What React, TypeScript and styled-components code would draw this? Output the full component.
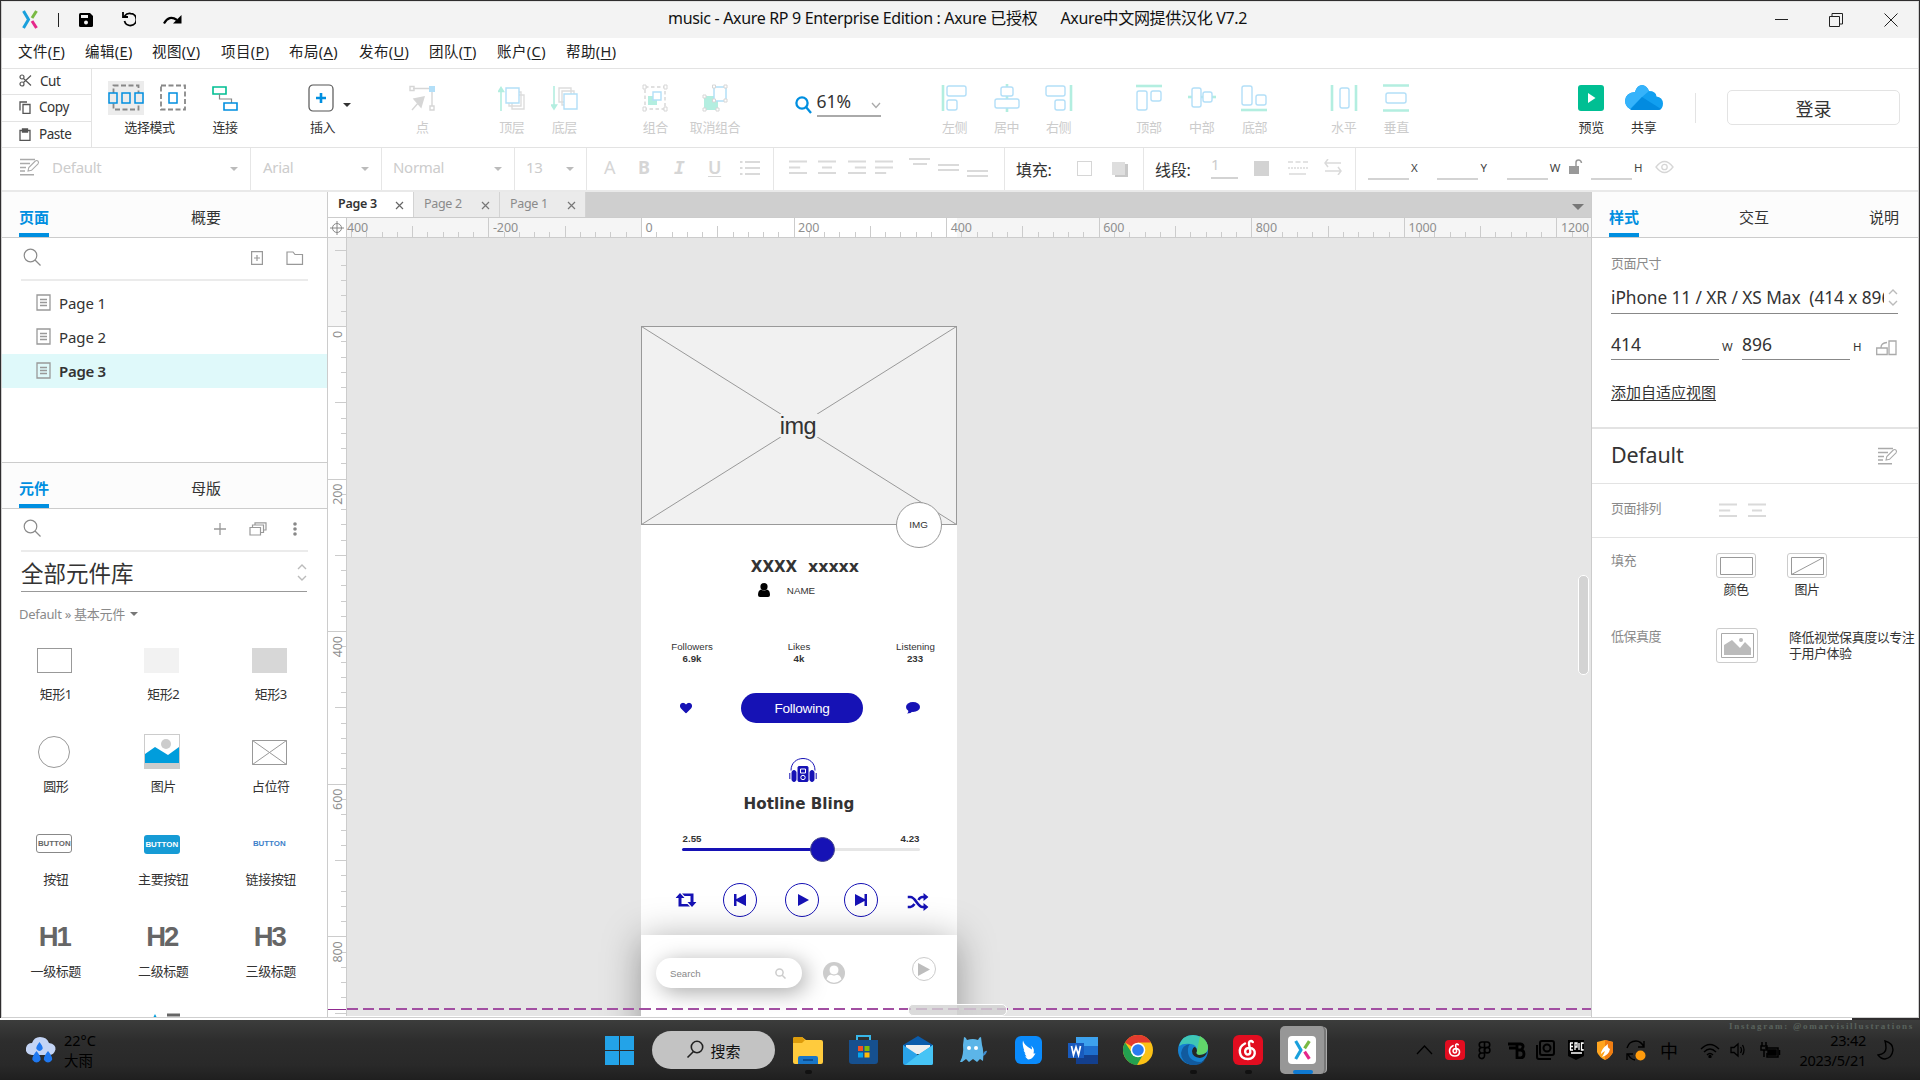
import React from "react";
import styled, { createGlobalStyle, css } from "styled-components";

const UI = `"Noto Sans", "Noto Sans CJK SC", sans-serif`;
const BLUE = "#008fe0";
const PALE_BLUE = "#b3dff8";
const PALE_GREEN = "#b3eee0";
const INDIGO = "#1612b5";

const Global = createGlobalStyle`
  * { box-sizing: border-box; }
  body { margin: 0; background: #2b2a2c; font-family: ${UI}; color: #333; overflow: hidden; }
  svg { display: block; flex: none; }
`;

/* ---------- shell ---------- */
const Screen = styled.div`
  width: 1920px; height: 1080px; display: flex; flex-direction: column; overflow: hidden;
  background: #2f2d2e; white-space: pre;
`;
const Window = styled.div`
  height: 1017px; margin: 1px 1px 0; border: 1px solid #cfcfcf; border-top-color: #e2e2e2;
  background: #fff; display: flex; flex-direction: column;
`;
const Gutter = styled.div`height: 2px; flex: none; background: #fff; width: 1852px;`;

const TitleBar = styled.header`
  height: 36px; flex: none; background: #f3f3f3; display: flex; align-items: center; position: relative; padding-bottom: 1px;
`;
const Title = styled.div`
  position: absolute; left: 666px; top: 5px; font-size: 16px; line-height: 22px; letter-spacing: -0.33px; color: #111;
`;
const Gap = styled.i<{ $w: number }>`flex: none; width: ${(p) => p.$w}px;`;
const Push = styled.i`flex: 1;`;
const TitleRule = styled.i`width: 1px; height: 14px; background: #222;`;

const MenuBar = styled.nav`
  height: 31px; flex: none; display: flex; border-bottom: 1px solid #e3e3e3; padding-left: 16px;
`;
const MenuItem = styled.span<{ $w: number }>`
  width: ${(p) => p.$w}px; font-size: 14.5px; line-height: 26px; letter-spacing: 0.4px; color: #222;
  u { text-underline-offset: 2px; }
`;

/* ---------- main toolbar ---------- */
const Toolbar = styled.div`
  height: 79px; flex: none; display: flex; border-bottom: 1px solid #e3e3e3;
`;
const Clipboard = styled.div`width: 90px; border-right: 1px solid #e3e3e3; flex: none;`;
const ClipRow = styled.div`
  height: 25px; display: flex; align-items: center; padding: 0 0 2px 17px; gap: 8px; font-size: 13.5px; letter-spacing: -0.45px;
  & + & { border-top: 1px solid #e3e3e3; height: 27px; }
`;
const Tool = styled.div<{ $off?: boolean; $w?: number }>`
  width: ${(p) => p.$w ?? 52.5}px; flex: none; padding-top: 10px; display: flex; flex-direction: column; align-items: center;
  color: ${(p) => (p.$off ? "#ccc" : "#333")};
`;
const ToolArt = styled.div`height: 38px; display: flex; align-items: center; justify-content: center; position: relative;`;
const ToolLabel = styled.span<{ $shift?: number }>`
  font-size: 13px; line-height: 20px; letter-spacing: -0.4px; margin-top: -0.5px; margin-left: ${(p) => p.$shift ?? 0}px;
`;
const ActiveArt = styled.div`background: #ececec; width: 36px; height: 34px; display: grid; place-items: center;`;
const Caret = styled.i<{ $c?: string; $s?: number }>`
  width: 0; height: 0; flex: none; border: ${(p) => p.$s ?? 4}px solid transparent; border-bottom: 0;
  border-top-color: ${(p) => p.$c ?? "#333"};
`;
const InsertCaret = styled(Caret)`margin: 34px 0 0 -4px;`;
const TabMenuCaret = styled(Caret)`margin: 12px 7px 0 0;`;
const ZoomField = styled.div`
  margin-top: 21px; height: 27px; width: 64px; border-bottom: 2px solid #aaa; display: flex; align-items: center;
  justify-content: space-between; font-size: 17.5px; letter-spacing: 0; padding-bottom: 3px;
  svg { margin-top: 9px; }
`;
const ZoomIcon = styled.div`margin-top: 27px; width: 22px;`;
const ToolRule = styled.i`width: 1px; height: 30px; margin-top: 24px; background: #e3e3e3;`;
const Login = styled.button`
  width: 173px; height: 35px; margin-top: 21px; border: 1.5px solid #e3e3e3; border-radius: 5px; background: #fff; padding: 0;
  font: 18px ${UI}; color: #333;
`;

/* ---------- style bar ---------- */
const StyleBar = styled.div`height: 44px; flex: none; display: flex; border-bottom: 2px solid #e9e9e9;`;
const Cell = styled.div<{ $w: number; $l: number }>`
  width: ${(p) => p.$w}px; padding-left: ${(p) => p.$l}px; flex: none; display: flex; align-items: center;
  border-right: 1px solid #e6e6e6; color: #ccc; font-size: 15px; letter-spacing: -0.3px; padding-bottom: 4px;
`;
const CellLast = styled(Cell)`border-right: 0; color: #444; font-size: 11.5px;`;
const CellCaret = styled(Caret)`margin: 4px 12px 0 0;`;
const CellLabel = styled.span<{ $w: number }>`
  width: ${(p) => p.$w}px; flex: none; color: #333; font-size: 16px; letter-spacing: -0.3px; padding-top: 3px;
`;
const Glyph = styled.span<{ $w: number; $b?: boolean; $i?: boolean; $u?: boolean }>`
  width: ${(p) => p.$w}px; flex: none; font-size: 18px; text-align: left; color: #d6d6d6;
  ${(p) => p.$b && css`font-weight: 700;`}
  ${(p) => p.$i && css`font-style: italic; font-family: "DejaVu Sans Mono", monospace; font-weight: 700;`}
  ${(p) => p.$u && css`text-decoration: underline; text-underline-offset: 2px; font-weight: 600;`}
`;
const Line = styled.i<{ $w: number }>`width: ${(p) => p.$w}px; height: 2px; background: #d3d3d3; margin-top: 24px; flex: none;`;
const LineValue = styled.div`width: 27px; border-bottom: 2px solid #d3d3d3; height: 24px; line-height: 18px;`;
const Swatch = styled.i<{ $k: "open" | "drop" | "full" }>`
  width: 15px; height: 15px; flex: none; margin-top: 2px;
  ${(p) => p.$k === "open" && css`border: 1.5px solid #d6d6d6;`}
  ${(p) => p.$k === "drop" && css`background: #dedede; box-shadow: 3px 2px 0 #c8c8c8; width: 13px; height: 13px;`}
  ${(p) => p.$k === "full" && css`background: #d3d3d3;`}
`;

/* ---------- workspace ---------- */
const Work = styled.div`flex: 1; display: flex; min-height: 0;`;
const LeftPanel = styled.aside`width: 326px; flex: none; border-right: 1px solid #ccc; overflow: hidden; display: flex; flex-direction: column;`;
const RightPanel = styled.aside`flex: 1; min-width: 0; border-left: 1px solid #ccc;`;
const Tabs = styled.div<{ $l: number }>`
  height: 46px; flex: none; display: flex; padding-left: ${(p) => p.$l}px; background: #fcfcfc; border-bottom: 1px solid #ccc;
`;
const Tab = styled.span<{ $on?: boolean; $gap?: number }>`
  width: 30px; margin-right: ${(p) => p.$gap ?? 0}px; height: 45px; line-height: 50px; font-size: 15px; flex: none;
  ${(p) => p.$on && css`color: ${BLUE}; font-weight: 700; border-bottom: 4px solid ${BLUE};`}
`;
const SearchRow = styled.div`
  height: 43px; flex: none; margin: 0 19px; display: flex; align-items: center; border-bottom: 2px solid #ebebeb; padding: 0 0 2px 2px;
`;
const PageList = styled.div`height: 176px; margin-top: 5px; flex: none;`;
const PageRow = styled.div<{ $on?: boolean }>`
  height: 34px; display: flex; align-items: center; padding: 0 0 1px 34px; gap: 8px; font-size: 15px; letter-spacing: -0.1px;
  ${(p) => p.$on && css`background: #dff9fa; font-weight: 600; letter-spacing: -0.3px;`}
`;
const SecondTabs = styled(Tabs)`border-top: 1px solid #ccc; height: 47px;`;
const LibSelect = styled.div`
  height: 40px; margin: 0 20px 0 19px; flex: none; border-bottom: 1.5px solid #999; display: flex; align-items: center;
  justify-content: space-between; font-size: 22.5px; padding-top: 2px;
`;
const Crumb = styled.div`
  padding-left: 17px; font-size: 13px; color: #8a8a8a; height: 44px; line-height: 46px; letter-spacing: -0.3px; display: flex; align-items: center; gap: 5px; flex: none;
`;
const Library = styled.div`
  display: grid; grid-template-columns: repeat(3, 107.5px); grid-auto-rows: 92.4px; overflow: hidden; flex: 1; margin-left: -1.5px;
`;
const Widget = styled.div`
  display: flex; flex-direction: column; align-items: center; font-size: 13px; letter-spacing: -0.4px;
  span { margin-left: 3px; line-height: 20px; }
`;
const WidgetArt = styled.div`height: 48px; width: 50px; display: grid; place-items: center;`;
const RectArt = styled.i<{ $bg: string; $bd?: string }>`
  width: 35px; height: 25px; background: ${(p) => p.$bg}; border: 1px solid ${(p) => p.$bd ?? p.$bg};
`;
const CircleArt = styled.i`width: 32px; height: 32px; border: 1.5px solid #999; border-radius: 50%;`;
const ButtonArt = styled.b<{ $k: "line" | "fill" | "link" }>`
  width: 36px; height: 19px; border-radius: 3px; font: 700 7.9px/17px "Liberation Sans", sans-serif; letter-spacing: 0; text-align: center; color: #666;
  border: 1px solid transparent; margin-top: -3px;
  ${(p) => p.$k === "line" && css`border-color: #888;`}
  ${(p) => p.$k === "fill" && css`background: #169bd5; color: #fff; margin-top: 0;`}
  ${(p) => p.$k === "link" && css`color: #3d7fc9;`}
`;
const HeadArt = styled.b`font: 700 27.5px "Liberation Sans", sans-serif; letter-spacing: -2px; color: #666;`;

const Center = styled.main`width: 1263px; flex: none; display: flex; flex-direction: column; min-width: 0;`;
const DocTabs = styled.div`height: 26px; flex: none; display: flex; background: #cfcfcf; border-bottom: 1px solid #ccc;`;
const DocTab = styled.div<{ $on?: boolean }>`
  width: 86px; border-right: 1px solid #d3d3d3; background: ${(p) => (p.$on ? "#fff" : "#ebebeb")}; display: flex; align-items: center;
  justify-content: space-between; padding: 0 9px 2px 10px; font-size: 12.5px; letter-spacing: -0.3px;
  color: ${(p) => (p.$on ? "#333" : "#8a8a8a")}; font-weight: ${(p) => (p.$on ? 600 : 400)};
  svg { margin-top: 4px; }
`;
const RulerRow = styled.div`height: 20px; flex: none; display: flex; border-bottom: 1px solid #ccc; overflow: hidden;`;
const Corner = styled.div`width: 19px; border-right: 1px solid #ccc; display: grid; place-items: center; flex: none;`;
const Stage = styled.div`flex: 1; display: flex; min-height: 0; border-bottom: 1px solid #fff;`;
const VRuler = styled.div`width: 19px; flex: none; border-right: 1px solid #ccc; overflow: hidden;`;
const Canvas = styled.div`flex: 1; background: #e6e6e6; position: relative; overflow: hidden;`;
const Page = styled.div`position: absolute; left: 294px; top: 88px; width: 316px; height: 700px; background: #fff;`;
const Fold = styled.i`
  position: absolute; left: 0; right: 0; bottom: 6px; height: 2px;
  background: repeating-linear-gradient(90deg, #a24fa2 0 11px, transparent 11px 16.25px);
`;
const HThumb = styled.i`
  position: absolute; left: 561px; bottom: 0; width: 99px; height: 12px; border: 1px solid #fff; border-radius: 5px; background: #d3d3d3d0;
`;
const VThumb = styled.i`
  position: absolute; right: 2px; top: 337px; width: 11px; height: 100px; border: 1px solid #fff; border-radius: 5px; background: #d3d3d3;
`;

/* ---------- phone prototype ---------- */
const Txt = styled.span<{ $x: number; $y: number; $s: number; $b?: boolean; $f?: string; $c?: string; $ls?: number }>`
  position: absolute; left: ${(p) => p.$x}px; top: ${(p) => p.$y}px; transform: translate(-50%, -50%);
  font: ${(p) => (p.$b ? 700 : 400)} ${(p) => p.$s}px/1.2 ${(p) => p.$f ?? `"Liberation Sans", sans-serif`};
  color: ${(p) => p.$c ?? "#333"}; letter-spacing: ${(p) => p.$ls ?? 0}px;
`;
const At = styled.div<{ $x: number; $y: number }>`
  position: absolute; left: ${(p) => p.$x}px; top: ${(p) => p.$y}px; transform: translate(-50%, -50%);
`;
const Avatar = styled.div`
  position: absolute; left: 255px; top: 176px; width: 46px; height: 46px; border: 1px solid #999; border-radius: 50%; background: #fff;
`;
const Follow = styled.div`
  position: absolute; left: 100px; top: 367px; width: 122px; height: 30px; border-radius: 15px; background: ${INDIGO}; color: #fff;
  font: 13.6px/31px "Liberation Sans", sans-serif; text-align: center; letter-spacing: -0.25px;
`;
const Track = styled.div`
  position: absolute; left: 41px; top: 522px; width: 238px; height: 3px; border-radius: 2px;
  background: linear-gradient(90deg, ${INDIGO} 58%, #e6e6e6 58%);
`;
const Knob = styled.i`position: absolute; left: 128px; top: -11px; width: 25px; height: 25px; border-radius: 50%; background: ${INDIGO}; border: 1px solid #4a4a8c;`;
const Ring = styled(At)<{ $c?: string; $d?: number }>`
  width: ${(p) => p.$d ?? 34}px; height: ${(p) => p.$d ?? 34}px; border-radius: 50%; border: 1px solid ${(p) => p.$c ?? INDIGO};
  display: grid; place-items: center;
`;
const Dock = styled.div`
  position: absolute; left: 0; top: 609px; width: 316px; height: 110px; background: #fff; box-shadow: 0 4px 38px rgba(0, 0, 0, 0.35);
`;
const SearchPill = styled.div`
  position: absolute; left: 15px; top: 23px; width: 146px; height: 30px; border-radius: 15px; background: #fff;
  box-shadow: 4px 4px 22px rgba(0, 0, 0, 0.35); display: flex; align-items: center; justify-content: space-between; padding: 0 16px 0 14px;
  font: 9.7px "Liberation Sans", sans-serif; color: #888;
`;

/* ---------- inspector ---------- */
const Section = styled.div<{ $h: number; $thick?: boolean }>`
  height: ${(p) => p.$h}px; padding: 0 20px 0 19px; border-bottom: ${(p) => (p.$thick ? 2 : 1)}px solid #e3e3e3; display: flex; flex-direction: column;
`;
const InlineSection = styled(Section)`flex-direction: row; align-items: center; justify-content: space-between;`;
const FieldLabel = styled.span<{ $w?: number; $t?: number }>`
  font-size: 13px; line-height: 18px; letter-spacing: -0.5px; color: #8a8a8a; width: ${(p) => (p.$w ? p.$w + "px" : "auto")}; flex: none;
  margin-top: ${(p) => p.$t ?? 0}px;
`;
const SizeSelect = styled.div`
  margin-top: 10px; height: 32px; border-bottom: 1px solid #888; display: flex; align-items: center; gap: 4px; font-size: 17.3px; letter-spacing: -0.07px;
  div { width: 274px; overflow: hidden; }
`;
const SizeRow = styled.div`display: flex; margin-top: 14px; height: 32px; font-size: 17.5px;`;
const NumField = styled.div`width: 108px; border-bottom: 1px solid #888; line-height: 33px; height: 32px;`;
const Unit = styled.span<{ $w: number }>`width: ${(p) => p.$w}px; font-size: 11.5px; line-height: 37px; flex: none;`;
const AdaptLink = styled.a`margin-top: 21px; font-size: 15px; line-height: 22px; text-decoration: underline; text-underline-offset: 2px;`;
const StyleName = styled.span`font-size: 21.5px; letter-spacing: -0.2px; padding-bottom: 4px;`;
const Row = styled.div<{ $t: number }>`display: flex; padding: ${(p) => p.$t}px 0 0 19px;`;
const Option = styled.div<{ $mr?: number }>`
  display: flex; flex-direction: column; align-items: center; font-size: 13px; line-height: 20px; letter-spacing: -0.5px; margin-right: ${(p) => p.$mr ?? 0}px;
`;
const Frame = styled.div<{ $w: number; $h: number }>`
  width: ${(p) => p.$w}px; height: ${(p) => p.$h}px; border: 1px solid #ccc; border-radius: 3px; display: grid; place-items: center; margin-bottom: 1px;
`;
const Note = styled.p`margin: 1px 0 0 31px; font-size: 13px; line-height: 16px; letter-spacing: -0.47px;`;

/* ---------- taskbar ---------- */
const TaskBar = styled.footer`
  height: 60px; flex: none; background: linear-gradient(180deg, #3c3d3c 0, #2d2d2d 35%, #292929 75%, #1f1f1f 100%); display: flex; position: relative; align-items: center; color: #000;
`;
const Weather = styled.div`display: flex; width: 592px; padding-left: 25px; gap: 8px; align-items: center; font-size: 14.5px; line-height: 20px; flex: none;`;
const TaskApp = styled.div<{ $run?: boolean }>`
  width: 55px; height: 60px; flex: none; display: grid; place-items: center; position: relative;
  ${(p) => p.$run && css`&::after { content: ""; position: absolute; left: 24px; bottom: 6px; width: 7px; height: 4px; border-radius: 2px; background: #111; }`}
`;
const TaskSearch = styled.div`
  width: 123px; height: 38px; margin: 0 5.5px 0 5px; border-radius: 19px; background: #c3c3c3; display: flex; align-items: center; justify-content: center; gap: 6px;
  font-size: 15px; color: #111; flex: none;
`;
const ActiveApp = styled.div`
  width: 46px; height: 48px; border-radius: 5px; background: #979797; border-right: 2px solid #777; display: grid; place-items: center; position: relative;
  box-shadow: 2px 0 0 -1px #aaa;
  &::after { content: ""; position: absolute; left: 13px; bottom: 0; width: 20px; height: 4px; border-radius: 2px; background: #0f79d0; }
`;
const White = styled.div`width: 28px; height: 28px; border-radius: 4px; background: #fff; display: grid; place-items: center;`;
const Tray = styled.div`position: absolute; left: 1416px; right: 0; top: 0; height: 60px; display: flex; align-items: center;`;
const TrayIcon = styled.div<{ $w: number }>`width: ${(p) => p.$w}px; flex: none; display: flex; font-size: 18px;`;
const Clock = styled.div`text-align: right; width: 71px; font-size: 14.5px; line-height: 20px; letter-spacing: -0.25px; flex: none;`;
const Watermark = styled.div`
  position: absolute; right: 6px; top: 1px; font: 700 9px/10px "Liberation Serif", serif; color: #59625c; letter-spacing: 1.7px;
`;

/* ---------- icons ---------- */
type IcoProps = { w: number; h?: number; v?: string; c?: string; f?: string; s?: number; children: React.ReactNode };
const Ico = ({ w, h = w, v, c = "none", f = "none", s = 1, children }: IcoProps) => (
  <svg width={w} height={h} viewBox={v ?? `0 0 ${w} ${h}`} stroke={c} fill={f} strokeWidth={s}>{children}</svg>
);
const AxureMark = ({ w = 16, h = 19 }) => (
  <Ico w={w} h={h} v="0 0 16 19" s={3}>
    <path d="M1.5 1 6.5 9.5 1.5 18" stroke="#1aa0dc" /><path d="M14.5 1 10 8" stroke="#79b943" /><path d="M10 11 14.5 18" stroke="#e5278a" />
  </Ico>
);
const Magnifier = () => <Ico w={19} c="#8a8a8a" s={1.2}><circle cx="7.5" cy="7.5" r="6.3" /><path d="m12 12 5.5 5.5" /></Ico>;
const Spinner = () => <Ico w={10} h={17} c="#bbb" s={1.4}><path d="m1 5 4-4 4 4M1 12l4 4 4-4" /></Ico>;
const EditStyle = () => (
  <Ico w={20} h={18} c="#aaa" s={1.4}><path d="M0 1.5h15M0 5.5h10M0 9.5h6M0 13h5M0 16.8h14" /><path d="m8 13 .8-3.500 6.500-6.500q1.600-1 2.700.2t0 2.600l-6.500 6.500z" strokeWidth="1.1" /></Ico>
);
const AlignLines = ({ k, w = 18 }: { k: number; w?: number }) => {
  const d = [`M0 1.5h${w}M0 7.5h${w * 0.62}M0 13h${w}`, `M0 1.5h${w}M${w * 0.22} 7.5h${w * 0.56}M0 13h${w}`, `M0 1.5h${w}M${w * 0.38} 7.5h${w * 0.62}M0 13h${w}`, `M0 1.5h${w}M0 7.5h${w}M0 13h${w * 0.62}`];
  return <Ico w={w} h={15} c="#dadada" s={2}><path d={d[k]} /></Ico>;
};
const VAlign = ({ y }: { y: number }) => <Ico w={21} h={20} c="#dadada" s={2}><path d={`M0 ${y}h21M${y > 5 ? 0 : 4} ${y + 5}h${y > 5 ? 21 : 14}`} /></Ico>;
const Close = ({ c = "#777" }) => <Ico w={9} c={c} s={1.2}><path d="m1 1 7 7M8 1 1 8" /></Ico>;
const PageIcon = () => <Ico w={15} h={17} c="#999" s={1.3}><path d="M1 1h13v15H1zM4 5.5h7M4 8.5h7M4 11.5h7" /></Ico>;
const Netease = ({ s = 30 }) => (
  <Ico w={s} v="0 0 30 30" c="#fff" s={2.4}>
    <rect width="30" height="30" rx="6" fill="#e20d20" stroke="none" />
    <path d="M12 8.5c-8 4-6.500 15.500 3 15.500 8 0 9.500-11 1.500-11-6 0-5 6.500-1.800 6.500 4.500 0 2-6 1.300-10.500-.3-3.500 2.500-3.500 3.800-2" strokeLinecap="round" />
  </Ico>
);

const align = (bars: React.ReactNode, rects: React.ReactNode) => (
  <Ico w={28} h={28} c={PALE_BLUE} f="#fff" s={1.4}><g stroke={PALE_GREEN} strokeWidth="2.600">{bars}</g>{rects}</Ico>
);
const ALIGN = [
  ["左侧", align(<path d="M2 1v26" />, <><rect x="6" y="2" width="19" height="10" rx="2" /><rect x="6" y="16" width="10" height="10" rx="2" /></>)],
  ["居中", align(<path d="M14 0v28" />, <><rect x="8" y="3" width="12" height="9" rx="2" /><rect x="2" y="15" width="24" height="9" rx="2" /></>)],
  ["右侧", align(<path d="M26 1v26" />, <><rect x="1" y="2" width="19" height="10" rx="2" /><rect x="10" y="16" width="10" height="10" rx="2" /></>)],
] as const;
const ALIGN_V = [
  ["顶部", align(<path d="M1 2h26" />, <><rect x="2" y="7" width="10" height="19" rx="2" /><rect x="16" y="7" width="10" height="10" rx="2" /></>)],
  ["中部", align(<path d="M0 13h28" />, <><rect x="4" y="4" width="9" height="19" rx="2" /><rect x="15" y="8" width="9" height="10" rx="2" /></>)],
  ["底部", align(<path d="M1 26h26" />, <><rect x="2" y="2" width="10" height="19" rx="2" /><rect x="16" y="11" width="10" height="10" rx="2" /></>)],
] as const;
const SPREAD = [
  ["水平", align(<path d="M2 1v26M26 1v26" />, <rect x="10" y="4" width="9" height="20" rx="2" />)],
  ["垂直", align(<path d="M1 1.500h26M1 26.500h26" />, <rect x="4" y="9" width="20" height="10" rx="2" />)],
] as const;

const UNIT = 0.7629;
const HRuler = () => {
  const ticks = [];
  for (let u = -380; u <= 1240; u += 20) ticks.push(u);
  return (
    <Ico w={1244} h={19}>
      <rect width="1244" height="19" fill="#f5f5f5" /><rect x="294" width="316" height="19" fill="#fff" />
      {ticks.map((u) => { const x = Math.round(294 + u * UNIT) + 0.5; return <path key={u} d={`M${x} ${u % 200 === 0 ? 0 : u % 100 === 0 ? 8 : 14}V19`} stroke="#ccc" />; })}
      <text x="0" y="14" fontSize="12.5" fill="#8f8f8f" letterSpacing="-0.1">400</text>
      {[-200, 0, 200, 400, 600, 800, 1000, 1200].map((u) => (
        <text key={u} x={298.5 + u * UNIT} y="14" fontSize="12.5" fill="#8f8f8f" letterSpacing="-0.1">{u}</text>
      ))}
    </Ico>
  );
};
const VRulerArt = () => {
  const ticks = [];
  for (let u = -100; u <= 900; u += 20) ticks.push(u);
  return (
    <Ico w={18} h={779}>
      <rect width="18" height="88" fill="#f5f5f5" />
      {ticks.map((u) => { const y = Math.round(88 + u * UNIT) + 0.5; return <path key={u} d={`M${u % 200 === 0 ? 0 : u % 100 === 0 ? 7 : 13} ${y}H18`} stroke="#ccc" />; })}
      {[0, 200, 400, 600, 800].map((u) => (
        <text key={u} transform={`translate(13.500 ${93 + u * UNIT}) rotate(-90)`} textAnchor="end" fontSize="12.5" fill="#8f8f8f" letterSpacing="-0.1">{u}</text>
      ))}
      <path d="M0 771.500H18" stroke="#8f2a8f" />
    </Ico>
  );
};

const DEJAVU = `"DejaVu Sans", sans-serif`;
const Phone = () => (
  <Page>
    <svg width="316" height="199" stroke="#999">
      <rect x=".5" y=".5" width="315" height="198" fill="#f1f1f1" /><path d="M.5.5l315 198M315.500.5.5 198.500" />
      <rect x="139" y="88" width="38" height="23" fill="#f1f1f1" stroke="none" />
    </svg>
    <Txt $x={157} $y={100} $s={23.5} $ls={-0.5}>img</Txt>
    <Avatar /><Txt $x={277.5} $y={198.5} $s={9.9}>IMG</Txt>
    <Txt $x={133} $y={240.5} $s={15} $b $f={DEJAVU}>XXXX</Txt>
    <Txt $x={192.5} $y={241} $s={15.8} $b $f={DEJAVU}>xxxxx</Txt>
    <At $x={123} $y={264}><Ico w={12} h={14} f="#000"><circle cx="6" cy="3.700" r="3.600" /><path d="M3 6.500q3 2.200 6 0 3 .8 3 5.500 0 2-2 2H2q-2 0-2-2 0-4.700 3-5.500z" /></Ico></At>
    <Txt $x={160} $y={264.5} $s={9.8}>NAME</Txt>
    <Txt $x={51} $y={321} $s={9.7}>Followers</Txt><Txt $x={51} $y={333} $s={9.7} $b>6.9k</Txt>
    <Txt $x={158} $y={321} $s={9.7}>Likes</Txt><Txt $x={158} $y={333} $s={9.7} $b>4k</Txt>
    <Txt $x={274.5} $y={321} $s={9.7}>Listening</Txt><Txt $x={274} $y={333} $s={9.7} $b>233</Txt>
    <At $x={45} $y={382}><Ico w={12} h={11} f={INDIGO}><path d="M6 11 1 6Q-1 3.500.8 1.300 3.500-1 6 2 8.500-1 11.200 1.300 13 3.500 11 6z" /></Ico></At>
    <Follow>Following</Follow>
    <At $x={272} $y={382}><Ico w={14} h={12} f={INDIGO}><ellipse cx="7" cy="5" rx="7" ry="5" /><path d="M2 7q1 3-1 4.500Q5 11.500 7 9z" /></Ico></At>
    <At $x={162} $y={444}>
      <Ico w={28} h={25} c={INDIGO} f={INDIGO}><path d="M2 13C2-3 26-3 26 13" fill="none" /><rect x="3" y="13" width="4" height="11" rx="2" /><rect x="21" y="13" width="4" height="11" rx="2" /><path d="M.8 15.500v6M27.200 15.500v6" /><rect x="9" y="9" width="10" height="15" rx="1" /><path d="M11.500 11.500h5v4h-5z" stroke="#fff" fill="none" /><circle cx="14" cy="20" r="2.200" stroke="#fff" fill="none" /></Ico>
    </At>
    <Txt $x={158} $y={478} $s={15.2} $b $f={DEJAVU}>Hotline Bling</Txt>
    <Txt $x={51} $y={513} $s={9.7} $b>2.55</Txt><Txt $x={269} $y={513} $s={9.7} $b>4.23</Txt>
    <Track><Knob /></Track>
    <At $x={44.5} $y={574}><Ico w={21} h={14} f={INDIGO}><path d="M4.500 0 9 5H6v6h6l2.500 2.500H3V5H0zM16.500 14 12 9h3V3H9L6.500.5H18V9h3z" /></Ico></At>
    <Ring $x={99} $y={574}><Ico w={12} h={12} f={INDIGO}><path d="M0 0h2.500v5L12 0v12L2.500 7v5H0z" /></Ico></Ring>
    <Ring $x={161} $y={574}><Ico w={13} h={12} f={INDIGO}><path d="m2 0 11 6-11 6z" /></Ico></Ring>
    <Ring $x={220} $y={574}><Ico w={12} h={12} f={INDIGO}><path d="M12 0H9.500v5L0 0v12l9.500-5v5H12z" /></Ico></Ring>
    <At $x={276.5} $y={576}><Ico w={21} h={18} c={INDIGO} s={2.6}><path d="M0 4h3c5 0 7 10 12 10h2M0 14h3c2 0 3-1.500 4-3M11 7c1-2 2.500-3 4-3h2" /><path d="m16 0 5 4-5 4zM16 10l5 4-5 4z" fill={INDIGO} stroke="none" /></Ico></At>
    <Dock>
      <SearchPill>Search<Ico w={11} c="#ccc" s={1.5}><circle cx="4.500" cy="4.500" r="3.600" /><path d="m7.200 7.200 3.300 3.300" /></Ico></SearchPill>
      <At $x={192.5} $y={38}><Ico w={22} v="0 0 22 22"><circle cx="11" cy="11" r="11" fill="#ccc" /><path d="M3.500 17.500q1-4.500 5-5 2.500 1.500 5 0 4 .5 5 5Q11 24 3.500 17.500z" fill="#fff" /><circle cx="11" cy="8" r="5" fill="#fff" stroke="#ccc" /></Ico></At>
      <Ring $x={283} $y={34} $d={24} $c="#ccc"><Ico w={12} h={13} f="#bdbdbd"><path d="m0 0 12 6.500L0 13z" /></Ico></Ring>
    </Dock>
  </Page>
);

const menus: [string, string, number][] = [["文件", "F", 67], ["编辑", "E", 67], ["视图", "V", 69], ["项目", "P", 68], ["布局", "A", 70], ["发布", "U", 70], ["团队", "T", 68], ["账户", "C", 69], ["帮助", "H", 60]];

export default function App() {
  return (
    <Screen>
      <Global />
      <Window>
        <TitleBar>
          <Gap $w={20} /><AxureMark /><Gap $w={20} /><TitleRule /><Gap $w={20} />
          <Ico w={14} f="#000"><path d="M1.500 0H11l3 3v9.500q0 1.500-1.500 1.500h-11Q0 14 0 12.500v-11Q0 0 1.500 0z" /><path d="M2 2h7v3H2z" fill="#f3f3f3" /><circle cx="7" cy="9.500" r="2" fill="#f3f3f3" /></Ico>
          <Gap $w={29} />
          <Ico w={14} h={15} c="#000" s={1.8}><path d="M2.500 4Q5 1 8.500 1.500a6 6 0 1 1-6 7.500" /><path d="M1 0v5h5" /></Ico>
          <Gap $w={27} />
          <Ico w={19} h={11} c="#000" s={2.2}><path d="M1 9.500Q6 .5 14 6" /><path d="M18.500 1v8.500h-8.500z" fill="#000" stroke="none" /></Ico>
          <Title>music - Axure RP 9 Enterprise Edition : Axure 已授权{"      "}Axure中文网提供汉化 V7.2</Title>
          <Push />
          <Ico w={13} h={13} c="#222"><path d="M0 6.500h13" /></Ico><Gap $w={41} />
          <Ico w={14} c="#222"><path d="M.5 3.500h10v10H.5zM3 3.500V.5h10.500v10.500h-3" /></Ico><Gap $w={41} />
          <Ico w={14} c="#222"><path d="m.5.5 13 13M13.500.5l-13 13" /></Ico><Gap $w={20} />
        </TitleBar>
        <MenuBar>{menus.map(([t, k, w]) => <MenuItem key={k} $w={w}>{t}(<u>{k}</u>)</MenuItem>)}</MenuBar>
        <Toolbar>
          <Clipboard>
            <ClipRow><Ico w={13} c="#555" s={1.2}><circle cx="3" cy="3" r="2" /><circle cx="3" cy="10" r="2" /><path d="m4.500 4.500 7.500 7M4.500 8.500l7.500-7" /></Ico>Cut</ClipRow>
            <ClipRow><Ico w={12} h={13} c="#555" s={1.3}><path d="M4 3.500h7v9H4zM1 9.500v-8.500h7" /></Ico>Copy</ClipRow>
            <ClipRow><Ico w={12} h={13} c="#555" s={1.3}><path d="M1 2.500h10v10H1z" /><path d="M3.500 1h5v3h-5z" fill="#555" /></Ico>Paste</ClipRow>
          </Clipboard>
          <Gap $w={16} />
          <Tool $w={78}>
            <ToolArt>
              <ActiveArt><Ico w={36} h={28} c="#888" s={1.8}><path d="M5.500 1.500h25v24h-25z" strokeDasharray="5 2.500" /><g stroke={BLUE} strokeWidth="1.500" fill="#ececec"><path d="M1 9h8v10H1zM14 9h8v10h-8zM27 9h8v10h-8z" /></g></Ico></ActiveArt>
              <Gap $w={16} />
              <Ico w={26} h={28} c="#888" s={1.8}><path d="M1 1.500h24v24H1z" strokeDasharray="5 2.500" /><path d="M9 9h8v10H9z" stroke={BLUE} strokeWidth="1.500" /></Ico>
            </ToolArt>
            <ToolLabel $shift={5}>选择模式</ToolLabel>
          </Tool>
          <Gap $w={13} />
          <Tool $w={52}><ToolArt><Ico w={26} h={26} s={1.6}><path d="M1 2h13v7H1z" stroke="#00bf93" /><path d="M7.500 9v5h12v4" stroke="#888" strokeWidth="1.200" /><path d="M12 18h13v7H12z" stroke={BLUE} /></Ico></ToolArt><ToolLabel>连接</ToolLabel></Tool>
          <Gap $w={44} />
          <Tool $w={52}><ToolArt><Ico w={26} h={28} c="#555" s={1.2}><rect x="1" y="1" width="24" height="26" rx="4" /><path d="M8 14h10M13 9v10" stroke={BLUE} strokeWidth="2.600" /></Ico></ToolArt><ToolLabel $shift={3}>插入</ToolLabel></Tool>
          <InsertCaret />
          <Gap $w={45} />
          <Tool $off><ToolArt><Ico w={26} h={28} c="#d6d6d6" s={1.4}><path d="M4 4.500h16M23 8v14" /><path d="M1 2.500h4v4H1zM21 22h4v4h-4z" /><path d="M20 2h6v6h-6z" fill={PALE_BLUE} stroke="none" /><path d="m3 26 7-8M5 15l10-2-3 10z" fill="#d6d6d6" /></Ico></ToolArt><ToolLabel>点</ToolLabel></Tool>
          <Gap $w={37} />
          <Tool $off><ToolArt><Ico w={27} h={27} c="#ddd" f="#fff" s={1.4}><path d="M14 10h12v14H14zM11 7h12v14H11z" /><path d="M8 3h13v15H8z" stroke={PALE_BLUE} /><path d="M3 26V4M0.500 6.500l2.500-4 2.500 4z" stroke={PALE_GREEN} fill={PALE_GREEN} strokeWidth="1.600" /></Ico></ToolArt><ToolLabel>顶层</ToolLabel></Tool>
          <Tool $off><ToolArt><Ico w={27} h={27} c="#ddd" f="#fff" s={1.4}><path d="M8 3h12v14H8zM11 6h12v14H11z" /><path d="M13 9h13v15H13z" stroke={PALE_BLUE} /><path d="M3 1v22M0.500 20l2.500 4 2.500-4z" stroke={PALE_GREEN} fill={PALE_GREEN} strokeWidth="1.600" /></Ico></ToolArt><ToolLabel>底层</ToolLabel></Tool>
          <Gap $w={38.5} />
          <Tool $off><ToolArt><Ico w={26} h={28} c="#d6d6d6" s={1.4}><path d="M3 3h20v22H3z" strokeDasharray="3.500 2.500" /><path d="M6 12h9v9H6z" fill={PALE_GREEN} stroke="none" /><path d="M11 8h8v8h-8z" stroke={PALE_BLUE} fill="#fff" /><path d="M1 1h3v4H1zM22 1h3v4h-3zM1 23h3v4H1zM22 23h3v4h-3z" fill="#fff" strokeWidth="1" /></Ico></ToolArt><ToolLabel>组合</ToolLabel></Tool>
          <Tool $off $w={67}><ToolArt><Ico w={26} h={28} c="#d6d6d6" s={1}><path d="M2 12h14v14H2z" fill={PALE_GREEN} stroke="none" /><path d="M12 3h12v14H12z" stroke={PALE_BLUE} strokeWidth="1.500" fill="#fff" /><path d="M10.500 1h3v3h-3zM22 1h3v3h-3zM22 15h3v3h-3zM10.500 15h3v3h-3zM1 11h3v3H1zM1 24h3v3H1zM14 24h3v3h-3z" fill="#fff" /></Ico></ToolArt><ToolLabel>取消组合</ToolLabel></Tool>
          <Gap $w={46} />
          <ZoomIcon><Ico w={17} h={18} c={BLUE} s={2.3}><circle cx="7" cy="7" r="5.600" /><path d="m11 11 5 6" /></Ico></ZoomIcon>
          <ZoomField>61%<Ico w={10} h={7} c="#aaa" s={1.3}><path d="m1 1 4 4.500L9 1" /></Ico></ZoomField>
          <Gap $w={48} />
          {ALIGN.map(([t, a]) => <Tool key={t} $off $w={52}><ToolArt>{a}</ToolArt><ToolLabel>{t}</ToolLabel></Tool>)}
          <Gap $w={38} />
          {ALIGN_V.map(([t, a]) => <Tool key={t} $off $w={52.8}><ToolArt>{a}</ToolArt><ToolLabel>{t}</ToolLabel></Tool>)}
          <Gap $w={36.5} />
          {SPREAD.map(([t, a]) => <Tool key={t} $off><ToolArt>{a}</ToolArt><ToolLabel>{t}</ToolLabel></Tool>)}
          <Gap $w={142.5} />
          <Tool><ToolArt><Ico w={26} h={26} f="#00bf93"><rect width="26" height="26" rx="3" /><path d="m10 8 7.500 5-7.500 5z" fill="#fff" /></Ico></ToolArt><ToolLabel>预览</ToolLabel></Tool>
          <Tool><ToolArt><Ico w={38} h={26}><path d="M8 25Q0 23 0 15.500 1 7.500 10 7 12 0 17.500 0 22 1 24 6q7 0 7.500 5.500Q37.500 12 38 18.500q0 6-5 6.500z" fill="#119ff0" /><path d="M5 24Q0 21 0 15.500 1 7.500 10 7 12 0 17.500 0 22 1 24 6l-7 6z" fill="#35b3fb" /><path d="m17 12 19 12q-1 1-3 1H5z" fill="#028be0" /></Ico></ToolArt><ToolLabel>共享</ToolLabel></Tool>
          <Gap $w={25} /><ToolRule /><Gap $w={31} />
          <Login>登录</Login>
        </Toolbar>
        <StyleBar>
          <Cell $w={249} $l={18}><EditStyle /><Gap $w={12} />Default<Push /><CellCaret $c="#bbb" /></Cell>
          <Cell $w={131} $l={12}>Arial<Push /><CellCaret $c="#bbb" /></Cell>
          <Cell $w={133} $l={11}>Normal<Push /><CellCaret $c="#bbb" /></Cell>
          <Cell $w={72} $l={11}>13<Push /><CellCaret $c="#bbb" /></Cell>
          <Cell $w={187} $l={17}>
            <Glyph $w={34}>A</Glyph><Glyph $w={36} $b>B</Glyph><Glyph $w={34} $i>I</Glyph><Glyph $w={32} $u>U</Glyph>
            <Ico w={20} h={15} c="#dadada" s={2}><path d="M5 2h15M5 8h15M5 14h15M0 2h2.500M0 8h2.500M0 14h2.500" /></Ico>
          </Cell>
          <Cell $w={231} $l={15}>
            <AlignLines k={0} /><Gap $w={11} /><AlignLines k={1} /><Gap $w={12} /><AlignLines k={2} /><Gap $w={9} /><AlignLines k={3} /><Gap $w={16} />
            <VAlign y={2} /><Gap $w={8} /><VAlign y={8} /><Gap $w={8} /><VAlign y={14} />
          </Cell>
          <Cell $w={139} $l={11}><CellLabel $w={61}>填充:</CellLabel><Swatch $k="open" /><Gap $w={20} /><Swatch $k="drop" /></Cell>
          <Cell $w={212} $l={11}>
            <CellLabel $w={56}>线段:</CellLabel><LineValue>1</LineValue><Gap $w={16} /><Swatch $k="full" /><Gap $w={19} />
            <Ico w={20} h={15} c="#dadada" s={1.5}><path d="M0 2h20" strokeDasharray="5 2.500" /><path d="M0 8h20" strokeDasharray="2 1" /><path d="M1 14h17" /></Ico><Gap $w={16} />
            <Ico w={18} h={16} c="#dadada" s={1.5}><path d="M4 0 1 4l3 4M1 4h16M14 8l3 4-3 4M17 12H1" /></Ico>
          </Cell>
          <CellLast $w={540} $l={12}>
            <Line $w={41} /><Gap $w={2} />X<Gap $w={20} /><Line $w={41} /><Gap $w={2} />Y<Gap $w={20} /><Line $w={41} /><Gap $w={2} />W<Gap $w={9} />
            <Ico w={14} h={16} c="#999" s={1.5}><path d="M0 7h10v8H0z" fill="#999" stroke="none" /><path d="M7 7V3.500Q7 1 9.500 1T12.500 4" /></Ico><Gap $w={8} />
            <Line $w={41} /><Gap $w={2} />H<Gap $w={13} />
            <Ico w={19} h={14} c="#d6d6d6" s={1.3}><path d="M1 7q8.500-11 17 0Q9.500 18 1 7z" /><circle cx="9.500" cy="7" r="2.700" /></Ico>
          </CellLast>
        </StyleBar>
        <Work>
          <LeftPanel>
            <Tabs $l={17}><Tab $on $gap={142}>页面</Tab><Tab>概要</Tab></Tabs>
            <SearchRow><Magnifier /><Push />
              <Ico w={12} h={14} c="#999" s={1.2}><path d="M.6.6h10.800v12.800H.6zM3 7h6M6 4v6" /></Ico><Gap $w={23} />
              <Ico w={18} h={14} c="#999" s={1.2}><path d="M1 13.400V1h6l2 2.500h7.500v9.900z" /></Ico><Gap $w={4} />
            </SearchRow>
            <PageList>
              <PageRow><PageIcon />Page 1</PageRow><PageRow><PageIcon />Page 2</PageRow><PageRow $on><PageIcon />Page 3</PageRow>
            </PageList>
            <SecondTabs $l={17}><Tab $on $gap={142}>元件</Tab><Tab>母版</Tab></SecondTabs>
            <SearchRow><Magnifier /><Push />
              <Ico w={12} c="#999" s={1.3}><path d="M0 6h12M6 0v12" /></Ico><Gap $w={23} />
              <Ico w={18} h={14} c="#999" s={1.2}><path d="M1 5.500h10.500v7.500H1z" /><path d="M3.500 5.500V3h11v7.500h-3M6 3V.8h11V8h-2.500" /></Ico><Gap $w={26} />
              <Ico w={4} h={14} f="#888"><circle cx="2" cy="2" r="1.800" /><circle cx="2" cy="7" r="1.800" /><circle cx="2" cy="12" r="1.800" /></Ico><Gap $w={11} />
            </SearchRow>
            <LibSelect>全部元件库<Spinner /></LibSelect>
            <Crumb>Default » 基本元件<Caret $c="#777" /></Crumb>
            <Library>
              <Widget><WidgetArt><RectArt $bg="#fff" $bd="#999" /></WidgetArt><span>矩形1</span></Widget>
              <Widget><WidgetArt><RectArt $bg="#f2f2f2" /></WidgetArt><span>矩形2</span></Widget>
              <Widget><WidgetArt><RectArt $bg="#d7d7d7" /></WidgetArt><span>矩形3</span></Widget>
              <Widget><WidgetArt><CircleArt /></WidgetArt><span>圆形</span></Widget>
              <Widget><WidgetArt><Ico w={36} h={36}><rect x=".5" y=".5" width="35" height="34" fill="#fff" stroke="#ccc" /><path d="M1 29h34v6H1z" fill="#ccc" /><circle cx="22" cy="10" r="5" fill="#ccc" /><path d="M1 29V20l10-7 13 8 11-8v16z" fill="#009ddc" /></Ico></WidgetArt><span>图片</span></Widget>
              <Widget><WidgetArt><Ico w={35} h={25} c="#999"><path d="M.5.5h34v24H.5zl34 24M34.500.5l-34 24" /></Ico></WidgetArt><span>占位符</span></Widget>
              <Widget><WidgetArt><ButtonArt $k="line">BUTTON</ButtonArt></WidgetArt><span>按钮</span></Widget>
              <Widget><WidgetArt><ButtonArt $k="fill">BUTTON</ButtonArt></WidgetArt><span>主要按钮</span></Widget>
              <Widget><WidgetArt><ButtonArt $k="link">BUTTON</ButtonArt></WidgetArt><span>链接按钮</span></Widget>
              <Widget><WidgetArt><HeadArt>H1</HeadArt></WidgetArt><span>一级标题</span></Widget>
              <Widget><WidgetArt><HeadArt>H2</HeadArt></WidgetArt><span>二级标题</span></Widget>
              <Widget><WidgetArt><HeadArt>H3</HeadArt></WidgetArt><span>三级标题</span></Widget>
              <i /><Widget><Ico w={36} h={12}><path d="M11 8l2 4H9z" fill="#009ddc" /><path d="M23 7.500h13v3H23z" fill="#666" /></Ico></Widget>
            </Library>
          </LeftPanel>
          <Center>
            <DocTabs>
              <DocTab $on>Page 3<Close c="#666" /></DocTab><DocTab>Page 2<Close /></DocTab><DocTab>Page 1<Close /></DocTab>
              <Push /><TabMenuCaret $c="#777" $s={6} />
            </DocTabs>
            <RulerRow><Corner><Ico w={14} c="#888"><circle cx="7" cy="7" r="4.500" /><path d="M0 7h14M7 0v14" /></Ico></Corner><HRuler /></RulerRow>
            <Stage>
              <VRuler><VRulerArt /></VRuler>
              <Canvas><Phone /><Fold /><HThumb /><VThumb /></Canvas>
            </Stage>
          </Center>
          <RightPanel>
            <Tabs $l={17}><Tab $on $gap={100}>样式</Tab><Tab $gap={100}>交互</Tab><Tab>说明</Tab></Tabs>
            <Section $h={191} $thick>
              <FieldLabel $t={16}>页面尺寸</FieldLabel>
              <SizeSelect><div>iPhone 11 / XR / XS Max  (414 x 896)</div><Spinner /></SizeSelect>
              <SizeRow><NumField>414</NumField><Unit $w={23}> W</Unit><NumField>896</NumField><Unit $w={26}> H</Unit>
                <Ico w={21} h={34} c="#aaa" s={1.3}><path d="M.7 20h10.500v6.500H.7zM13 13h7v13.500h-7zM5 19.500q0-4.500 6-5" /></Ico></SizeRow>
              <AdaptLink>添加自适应视图</AdaptLink>
            </Section>
            <InlineSection $h={55}><StyleName>Default</StyleName><EditStyle /></InlineSection>
            <InlineSection $h={54}><FieldLabel $w={108} $t={-6}>页面排列</FieldLabel><AlignLines k={0} /><Gap $w={11} /><AlignLines k={1} /><Push /></InlineSection>
            <Row $t={15}>
              <FieldLabel $w={105} $t={-2}>填充</FieldLabel>
              <Option $mr={31}><Frame $w={40} $h={25}><Ico w={33} h={18} c="#999"><path d="M.5.5h32v17H.5z" /></Ico></Frame>颜色</Option>
              <Option><Frame $w={40} $h={25}><Ico w={33} h={18} c="#999"><path d="M.5.5h32v17H.5zM.5 17.500l32-17" /></Ico></Frame>图片</Option>
            </Row>
            <Row $t={29}>
              <FieldLabel $w={105} $t={-1}>低保真度</FieldLabel>
              <Frame $w={42} $h={35}><Ico w={33} h={26}><path d="M.5.5h32v24H.5z" stroke="#aaa" /><path d="M3 22V12l8-5 8 8 5-6 6 6v7z" fill="#bbb" /><circle cx="20" cy="7" r="2" fill="#bbb" /></Ico></Frame>
              <Note>降低视觉保真度以专注{"\n"}于用户体验</Note>
            </Row>
          </RightPanel>
        </Work>
      </Window>
      <Gutter />
      <TaskBar>
        <Weather>
          <Ico w={31} h={28}><path d="M7 19Q0 18 1 12q1-5 6-5Q9 1 15 1q7 0 9 6 7 1 6.500 6.500Q29 19 24 19z" fill="#c3d4f5" /><g fill="#1f78f0"><path d="M14.500 6q4 5 3 7-3 4-6 0-1-2 3-7zM11.500 15q5 6 4 9-4 5-8 0-1-3 4-9zM23 15q5 6 4 9-4 5-8 0-1-3 4-9z" /></g></Ico>
          <div>22°C<br />大雨</div>
        </Weather>
        <TaskApp><Ico w={29}><path d="M0 0h14v14H0zM15 0h14v14H15zM0 15h14v14H0zM15 15h14v14H15z" fill="#23a3e8" /></Ico></TaskApp>
        <TaskSearch><Ico w={18} h={20} c="#222" s={1.6}><circle cx="11" cy="7" r="5.700" /><path d="m7.500 11.500-6 6" /></Ico>搜索</TaskSearch>
        <TaskApp $run><Ico w={30} h={28}><path d="M0 3q0-2 2-2h7l4 3h15q2 0 2 2v20q0 2-2 2H2q-2 0-2-2z" fill="#ffcb3d" /><path d="M0 3q0-2 2-2h7l3 3-3 3H0z" fill="#dd9c0b" /><path d="M5 28v-6q0-2 2-2h16q2 0 2 2v6z" fill="#1976c8" /><path d="M10 24h10" stroke="#0b4f94" strokeWidth="2" /></Ico></TaskApp>
        <TaskApp><Ico w={29} h={30}><path d="M8 6V1h13v5" stroke="#38b6e8" strokeWidth="2" /><path d="M0 5h29v21q0 3-3 3H3q-3 0-3-3z" fill="#16508f" /><path d="M9 11h5v5H9z" fill="#f35325" /><path d="M15.500 11h5v5h-5z" fill="#81bc06" /><path d="M9 17.500h5v5H9z" fill="#05a6f0" /><path d="M15.500 17.500h5v5h-5z" fill="#ffba08" /></Ico></TaskApp>
        <TaskApp><Ico w={30} h={29}><path d="M0 9 15 0l15 9v5H0z" fill="#0b5cab" /><path d="M3 9h24v9H3z" fill="#eee" /><path d="M0 9v18q0 2 2 2h26q2 0 2-2V9L15 19z" fill="#2aa4ea" /><path d="M2 29 15 19l15-10v18q0 2-2 2z" fill="#46c4f5" /></Ico></TaskApp>
        <TaskApp><Ico w={27} h={26}><path d="M4 0q2 0 3 3 6-2 11 0 1-3 3-3l1 8q2 6 1 16l-3-2-3 3-4-3-4 3-3-3-4 3H0Q4 18 3 8z" fill="#5cb5e8" /><path d="M23 17q2-4 4-3-1 4-4 5z" fill="#3f8ed0" /><circle cx="9" cy="11" r="2" fill="#fff" /><circle cx="16" cy="11" r="2" fill="#fff" /></Ico></TaskApp>
        <TaskApp><Ico w={27} h={28}><rect width="27" height="28" rx="6" fill="#0a8bfc" /><path d="M8 4.500q1 5 9 9 0-3-1-4 4 3 2.500 8l2 0-2 3q-2 3-5.500 3l-3-3 1.500 0-2-3 1 0-2-3 .8 0Q7 9 8 4.500z" fill="#fff" /></Ico></TaskApp>
        <TaskApp><Ico w={30} h={27}><path d="M8 0h22v9H8z" fill="#3da2ee" /><path d="M8 9h22v9H8z" fill="#1e6fce" /><path d="M8 18h22v9H8z" fill="#133f8d" /><path d="M0 6h16v15H0z" fill="#185abd" /><path d="m3.500 9 2 9 2.500-8 2.500 8 2-9" stroke="#fff" strokeWidth="1.700" /></Ico></TaskApp>
        <TaskApp><Ico w={30} v="0 0 30 30"><circle cx="15" cy="15" r="15" fill="#fbc116" /><path d="M15 15 2 7.500A15 15 0 0 1 28 7.500H15z" fill="#e33b2e" /><path d="M2 7.500A15 15 0 0 0 14 30l7-12-12 0z" fill="#23a050" /><circle cx="15" cy="15" r="7.300" fill="#fff" /><circle cx="15" cy="15" r="5.800" fill="#2a7bf0" /></Ico></TaskApp>
        <TaskApp $run><Ico w={30} v="0 0 30 30"><circle cx="15" cy="15" r="15" fill="#1680d0" /><path d="M1 11Q4 0 15 0q14 1 15 13-1 7-9 7-4-1-2-4 0-6-6-7Q5 8 1 11z" fill="#3fc7b5" /><path d="M22 1q8 5 8 12-1 7-9 7-4-1-2-4z" fill="#62d66a" /><path d="M10 14q-1 12 12 13 3 0 5-2-5 6-14 5Q3 27 3 18q1-8 9-9-2 2-2 5z" fill="#115a9e" /><path d="M19 16q-2 3 2 4 5 0 8-3-1 5-7 6-8-1-8-7 1-4 3-4 2 1 2 4z" fill="#262626" /></Ico></TaskApp>
        <TaskApp $run><Netease /></TaskApp>
        <TaskApp><ActiveApp><White><AxureMark w={17} h={20} /></White></ActiveApp></TaskApp>
        <Tray>
          <TrayIcon $w={29}><Ico w={17} h={10} c="#000" s={1.3}><path d="m1 9 7.500-8L16 9" /></Ico></TrayIcon>
          <TrayIcon $w={33}><Netease s={20} /></TrayIcon>
          <TrayIcon $w={30}><Ico w={13} h={19} c="#000" s={1.6}><path d="M6.500 1H4a2.700 2.700 0 0 0 0 5.500h2.500zM6.500 1H9a2.700 2.700 0 0 1 0 5.500H6.500zM6.500 6.500H4A2.700 2.700 0 0 0 4 12h2.500zM6.500 12H4a2.800 2.800 0 1 0 2.500 3z" /><circle cx="9.200" cy="9.200" r="2.700" /></Ico></TrayIcon>
          <TrayIcon $w={27}><Ico w={18} h={17} c="#000" s={2.8}><path d="M0 2h9M1 6h7M9 1v15h4q3-.5 3-4t-3-4H9M9 2h3.500q3 .5 2.500 3t-2.500 3" /></Ico></TrayIcon>
          <TrayIcon $w={32}><Ico w={20} c="#000" s={2}><rect x="5" y="1" width="14" height="14" rx="2" /><path d="M2 5v12q0 2 2 2h12" /><circle cx="12" cy="8" r="3.500" /></Ico></TrayIcon>
          <TrayIcon $w={30}><Ico w={18} h={20} f="#000"><path d="M1 0h16v16l-8 4-8-4z" /><path d="M3 3h3M3.500 3v7M3 6.500h3M3 10h3M8 10V3h2v4H8M12 3v7M16 4V3h-1.500v7H16V9M4 13h11" stroke="#fff" strokeWidth="1.300" fill="none" /></Ico></TrayIcon>
          <TrayIcon $w={29}><Ico w={16} h={20}><path d="m0 2 8-2 8 2v10q-2 5-8 8-6-3-8-8z" fill="#ffa51f" /><path d="m8 0 8 2v10q-2 5-8 8z" fill="#f07d12" /><path d="M4 14q0-5 7-10-1 4 2 5-1 6-8 8 2-3 3-6-2 1-4 3z" fill="#fff" /></Ico></TrayIcon>
          <TrayIcon $w={34}><Ico w={20} h={21} c="#000" s={1.4}><path d="M1 8q2-7 9-7 5 0 8 6M18 1v6h-6M1 20v-6h6M2 14q2 5 7 6" /><circle cx="14.500" cy="15.500" r="5" fill="#ff9b0c" stroke="none" /></Ico></TrayIcon>
          <TrayIcon $w={40}>中</TrayIcon>
          <TrayIcon $w={30}><Ico w={20} h={15} c="#000" s={1.4}><path d="M1 6q9-9 18 0M4 9q6-6 12 0M7 12q3-3 6 0" /><circle cx="10" cy="13.500" r="1" fill="#000" /></Ico></TrayIcon>
          <TrayIcon $w={30}><Ico w={15} h={16} c="#000" s={1.3}><path d="M1 5.500h3L8 2v12l-4-3.500H1zM10.500 5q2 3 0 6M12.500 3q3 5 0 10" /></Ico></TrayIcon>
          <TrayIcon $w={35}><Ico w={21} h={17} c="#000" s={1.5}><path d="M5 6h13v9H7v-4" /><path d="M8 8h8v5H8z" fill="#000" /><path d="M19.500 8v5M2 0v4M6 0v4M1 4h6v4H1zM4 8v7" /></Ico></TrayIcon>
          <Clock>23:42<br />2023/5/21</Clock><Gap $w={11} />
          <Ico w={17} h={20} c="#000" s={1.4}><path d="M8 1q8 2 8 9-1 8-8 9-4 0-7-4 8-1 8-7 0-4-1-7z" /></Ico>
        </Tray>
        <Watermark>Instagram: @omarvisillustrations</Watermark>
      </TaskBar>
    </Screen>
  );
}
